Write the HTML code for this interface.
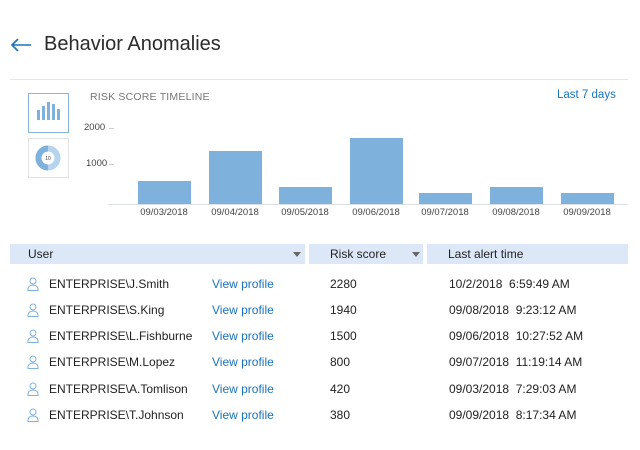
<!DOCTYPE html>
<html><head><meta charset="utf-8"><style>
*{margin:0;padding:0;box-sizing:border-box}
body{width:640px;height:450px;background:#fff;font-family:"Liberation Sans",sans-serif;color:#222;position:relative;overflow:hidden}
.a{position:absolute;white-space:nowrap}
.bar{position:absolute;background:#7eb1dc;width:53px}
.dl{position:absolute;top:207px;font-size:9.5px;color:#444;width:70px;text-align:center}
.lnk{color:#1a73ba}
.hdr{position:absolute;top:244px;height:20px;background:#dce8f7;font-size:12px;line-height:20px}
.caret{position:absolute;top:8px;width:0;height:0;border-left:4px solid transparent;border-right:4px solid transparent;border-top:5px solid #666}
.row{position:absolute;left:0;width:640px;height:16px;font-size:12px;line-height:16px}
.row span{position:absolute;white-space:nowrap}
.row svg{position:absolute;left:27px;top:1px}
</style></head><body>
<svg class="a" style="left:10px;top:37px" width="22" height="16" viewBox="0 0 22 16"><path d="M21 8H2M8 2L2 8L8 14" fill="none" stroke="#1a73ba" stroke-width="1.6"/></svg>
<div class="a" style="left:44px;top:33px;font-size:20px;color:#2b2b2b">Behavior Anomalies</div>
<div class="a" style="left:10px;top:79px;width:618px;height:1px;background:#e3e6ea"></div>

<div class="a" style="left:28px;top:93px;width:41px;height:40px;border:1px solid #86b6df"></div>
<div class="a" style="left:37px;top:110px;width:3px;height:10px;background:#7eb1dc"></div>
<div class="a" style="left:42px;top:106px;width:3px;height:14px;background:#7eb1dc"></div>
<div class="a" style="left:47px;top:102px;width:3px;height:18px;background:#7eb1dc"></div>
<div class="a" style="left:52px;top:104px;width:3px;height:16px;background:#7eb1dc"></div>
<div class="a" style="left:57px;top:109px;width:3px;height:11px;background:#7eb1dc"></div>
<div class="a" style="left:28px;top:138px;width:41px;height:40px;border:1px solid #e3e3e3"></div>
<svg class="a" style="left:35px;top:145px" width="26" height="26" viewBox="0 0 26 26"><circle cx="13" cy="13" r="9.5" fill="none" stroke="#b7d4ee" stroke-width="6"/><path d="M13 3.5A9.5 9.5 0 0 0 13 22.5" fill="none" stroke="#7eb1dc" stroke-width="6"/><text x="13" y="15" font-size="5" text-anchor="middle" fill="#444" font-family="Liberation Sans">10</text></svg>

<div class="a" style="left:90px;top:91px;font-size:10.5px;color:#777;letter-spacing:.2px">RISK SCORE TIMELINE</div>
<div class="a lnk" style="left:557px;top:89px;font-size:11.5px">Last 7 days</div>
<div class="a" style="left:84px;top:122px;font-size:9.5px;color:#444">2000</div>
<div class="a" style="left:86px;top:158px;font-size:9.5px;color:#444">1000</div>
<div class="a" style="left:109px;top:128px;width:5px;height:1px;background:#ccc"></div>
<div class="a" style="left:109px;top:164px;width:5px;height:1px;background:#ccc"></div>
<div class="a" style="left:108px;top:204px;width:520px;height:1px;background:#dde0e4"></div>
<div class="bar" style="left:138px;top:181px;height:23px"></div>
<div class="bar" style="left:209px;top:151px;height:53px"></div>
<div class="bar" style="left:279px;top:187px;height:17px"></div>
<div class="bar" style="left:350px;top:138px;height:66px"></div>
<div class="bar" style="left:419px;top:193px;height:11px"></div>
<div class="bar" style="left:490px;top:187px;height:17px"></div>
<div class="bar" style="left:561px;top:193px;height:11px"></div>
<div class="dl" style="left:129px">09/03/2018</div>
<div class="dl" style="left:200px">09/04/2018</div>
<div class="dl" style="left:270px">09/05/2018</div>
<div class="dl" style="left:341px">09/06/2018</div>
<div class="dl" style="left:410px">09/07/2018</div>
<div class="dl" style="left:481px">09/08/2018</div>
<div class="dl" style="left:552px">09/09/2018</div>

<div class="hdr" style="left:10px;width:295px;padding-left:18px">User<div class="caret" style="left:283px"></div></div>
<div class="hdr" style="left:309px;width:114px;padding-left:21px">Risk score<div class="caret" style="left:103px"></div></div>
<div class="hdr" style="left:427px;width:201px;padding-left:21px">Last alert time</div>

<div class="row" style="top:276px"><svg width="12" height="14" viewBox="0 0 12 14"><circle cx="6" cy="4" r="3" fill="none" stroke="#7eb1dc"/><path d="M1 13.5V12a5 4 0 0 1 10 0v1.5z" fill="none" stroke="#7eb1dc"/></svg><span style="left:49px">ENTERPRISE\J.Smith</span><span class="lnk" style="left:212px">View profile</span><span style="left:330px">2280</span><span style="left:449px">10/2/2018&nbsp; 6:59:49 AM</span></div>
<div class="row" style="top:302px"><svg width="12" height="14" viewBox="0 0 12 14"><circle cx="6" cy="4" r="3" fill="none" stroke="#7eb1dc"/><path d="M1 13.5V12a5 4 0 0 1 10 0v1.5z" fill="none" stroke="#7eb1dc"/></svg><span style="left:49px">ENTERPRISE\S.King</span><span class="lnk" style="left:212px">View profile</span><span style="left:330px">1940</span><span style="left:449px">09/08/2018&nbsp; 9:23:12 AM</span></div>
<div class="row" style="top:328px"><svg width="12" height="14" viewBox="0 0 12 14"><circle cx="6" cy="4" r="3" fill="none" stroke="#7eb1dc"/><path d="M1 13.5V12a5 4 0 0 1 10 0v1.5z" fill="none" stroke="#7eb1dc"/></svg><span style="left:49px">ENTERPRISE\L.Fishburne</span><span class="lnk" style="left:212px">View profile</span><span style="left:330px">1500</span><span style="left:449px">09/06/2018&nbsp; 10:27:52 AM</span></div>
<div class="row" style="top:354px"><svg width="12" height="14" viewBox="0 0 12 14"><circle cx="6" cy="4" r="3" fill="none" stroke="#7eb1dc"/><path d="M1 13.5V12a5 4 0 0 1 10 0v1.5z" fill="none" stroke="#7eb1dc"/></svg><span style="left:49px">ENTERPRISE\M.Lopez</span><span class="lnk" style="left:212px">View profile</span><span style="left:330px">800</span><span style="left:449px">09/07/2018&nbsp; 11:19:14 AM</span></div>
<div class="row" style="top:381px"><svg width="12" height="14" viewBox="0 0 12 14"><circle cx="6" cy="4" r="3" fill="none" stroke="#7eb1dc"/><path d="M1 13.5V12a5 4 0 0 1 10 0v1.5z" fill="none" stroke="#7eb1dc"/></svg><span style="left:49px">ENTERPRISE\A.Tomlison</span><span class="lnk" style="left:212px">View profile</span><span style="left:330px">420</span><span style="left:449px">09/03/2018&nbsp; 7:29:03 AM</span></div>
<div class="row" style="top:407px"><svg width="12" height="14" viewBox="0 0 12 14"><circle cx="6" cy="4" r="3" fill="none" stroke="#7eb1dc"/><path d="M1 13.5V12a5 4 0 0 1 10 0v1.5z" fill="none" stroke="#7eb1dc"/></svg><span style="left:49px">ENTERPRISE\T.Johnson</span><span class="lnk" style="left:212px">View profile</span><span style="left:330px">380</span><span style="left:449px">09/09/2018&nbsp; 8:17:34 AM</span></div>
</body></html>
